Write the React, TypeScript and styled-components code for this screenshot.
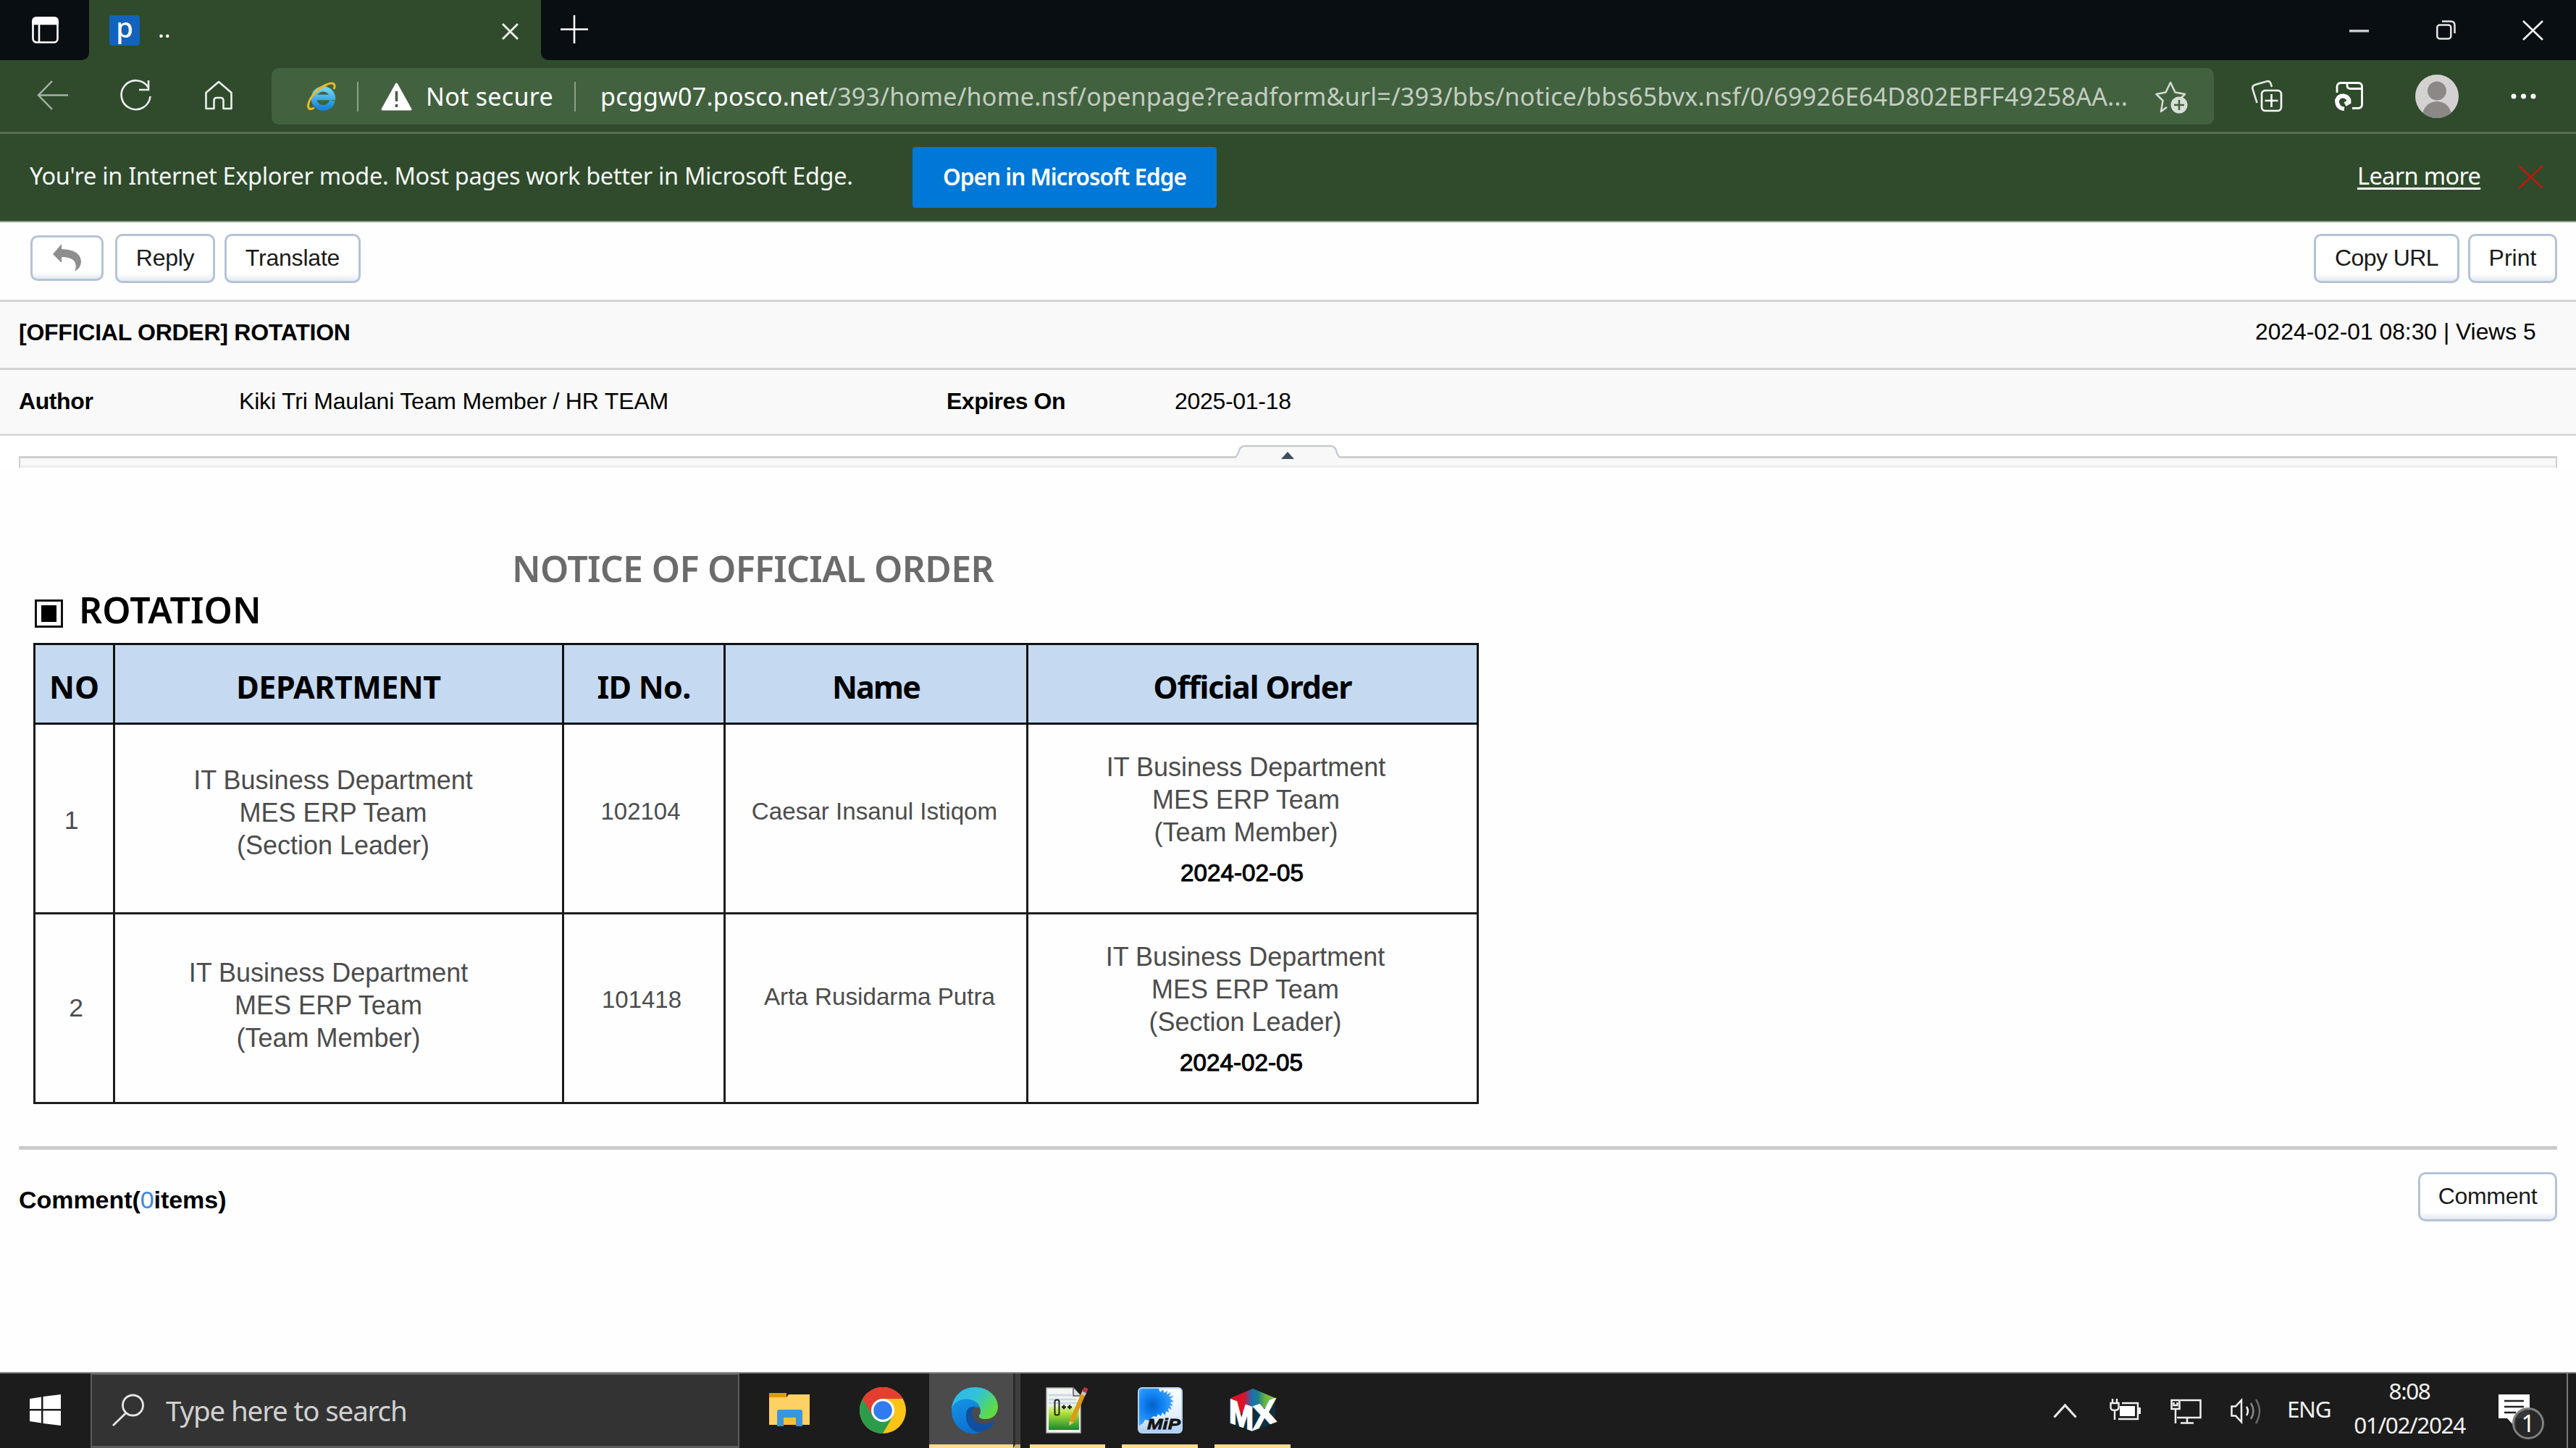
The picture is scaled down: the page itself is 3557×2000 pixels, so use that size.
import React from "react";
import styled, { createGlobalStyle } from "styled-components";

const UI = `"Noto Sans", "Open Sans", sans-serif`;
const DOC = `"Liberation Sans", Arial, sans-serif`;

const Global = createGlobalStyle`
  * { box-sizing: border-box; }
  html, body { margin: 0; padding: 0; background: #fefefe; }
  body { width: 3557px; height: 2000px; overflow: hidden; font-family: ${DOC}; color: #000; }
  svg { display: block; flex: none; overflow: visible; }
  button { font: inherit; color: inherit; }
`;

const Screen = styled.div`
  width: 3557px;
  height: 2000px;
  display: flex;
  flex-direction: column;
  overflow: hidden;
`;

/* A text run with a reserved width, so that neighbours keep their rhythm */
const Label = styled.span<{
  $w?: number; $ml?: number; $size: number; $track?: number; $weight?: number; $color?: string; $ui?: boolean; $align?: string; $lh?: number;
}>`
  flex: none;
  display: block;
  width: ${(p) => (p.$w ? `${p.$w}px` : "auto")};
  margin-left: ${(p) => p.$ml || 0}px;
  font-family: ${(p) => (p.$ui ? UI : DOC)};
  font-size: ${(p) => p.$size}px;
  font-weight: ${(p) => p.$weight || 400};
  letter-spacing: ${(p) => p.$track || 0}px;
  color: ${(p) => p.$color || "inherit"};
  text-align: ${(p) => p.$align || "left"};
  line-height: ${(p) => (p.$lh ? `${p.$lh}px` : "1.2")};
  white-space: nowrap;
`;

const Icon = styled.svg<{ $ml?: number; $mt?: number }>`
  margin-left: ${(p) => p.$ml || 0}px;
  margin-top: ${(p) => p.$mt || 0}px;
`;

/* ---------- browser chrome ---------- */

const TitleBar = styled.header`
  flex: none;
  height: 83px;
  display: flex;
  background: #090e12;
`;
const TabActions = styled.div`
  width: 123px;
  padding: 23px 0 0 44px;
  background: #090e12;
  border-bottom-right-radius: 10px;
`;
const TabShell = styled.div`
  display: flex;
  background: #2f4b2c;
`;
const Tab = styled.div`
  width: 624px;
  height: 83px;
  display: flex;
  align-items: flex-start;
  background: #2f4b2c;
`;
const TabRest = styled.div`
  flex: 1;
  display: flex;
  background: #090e12;
  border-bottom-left-radius: 10px;
`;
const TabBack = styled.div`
  flex: 1;
  display: flex;
  background: linear-gradient(90deg, #2f4b2c 20px, #090e12 20px);
`;
const Favicon = styled.div`
  width: 42px;
  height: 42px;
  margin: 21px 0 0 28px;
  border-radius: 4px;
  background: #1163bd;
  color: #fff;
  font: 500 38px/32px ${UI};
  text-align: center;
`;

const Toolbar = styled.div`
  flex: none;
  height: 102px;
  display: flex;
  align-items: flex-start;
  background: #2f4b2c;
  border-bottom: 3px solid #56704f;
`;
const AddressBar = styled.div`
  width: 2682px;
  height: 78px;
  margin: 11px 0 0 54px;
  display: flex;
  align-items: center;
  border-radius: 10px;
  background: #42623f;
`;
const Host = styled.span`
  color: #fff;
`;
const Rule = styled.i<{ $ml: number }>`
  width: 2px;
  height: 41px;
  margin-left: ${(p) => p.$ml}px;
  background: #8ba087;
`;
const Avatar = styled.div`
  width: 60px;
  height: 60px;
  margin: 20px 0 0 71px;
  border-radius: 50%;
  overflow: hidden;
`;

const InfoBar = styled.div`
  flex: none;
  height: 122px;
  display: flex;
  align-items: flex-start;
  padding-top: 18px;
  background: #2f4b2c;
  border-bottom: 2px solid #8a9a86;
`;
const OpenButton = styled.button`
  width: 420px;
  height: 84px;
  margin-left: 84px;
  padding: 0;
  display: flex;
  justify-content: center;
  border: 0;
  border-radius: 4px;
  background: #0078d7;
  color: #fff;
`;
const LearnMore = styled(Label)`
  text-decoration: underline;
  text-decoration-thickness: 3px;
  text-underline-offset: 4px;
  text-decoration-skip-ink: none;
`;

/* ---------- notice page ---------- */

const Actions = styled.div`
  flex: none;
  height: 107px;
  display: flex;
  align-items: flex-start;
  padding: 16px 26px 0 42px;
`;
const Spacer = styled.div`
  flex: 1;
`;
const Button = styled.button<{ $w: number; $ml?: number; $h?: number; $mt?: number }>`
  flex: none;
  width: ${(p) => p.$w}px;
  height: ${(p) => p.$h || 68}px;
  margin: ${(p) => p.$mt || 0}px 0 0 ${(p) => p.$ml || 0}px;
  padding: 0 0 2px;
  display: flex;
  align-items: center;
  justify-content: center;
  border: 3px solid #b4c3d6;
  border-radius: 10px;
  background: linear-gradient(#fff 84%, #e3e9f0);
  color: #1a1a1a;
`;
const MetaRow = styled.div<{ $h: number }>`
  flex: none;
  height: ${(p) => p.$h}px;
  display: flex;
  align-items: flex-start;
  padding-left: 26px;
  background: #f9f9f9;
  border-top: 3px solid #d3d3d3;
`;
const FoldArea = styled.div`
  flex: none;
  height: 48px;
  padding: 13px 26px 0 26px;
  border-top: 3px solid #d8d8d8;
  background: #fff;
`;
const FoldStrip = styled.div`
  height: 31px;
  display: flex;
  justify-content: center;
  background: linear-gradient(transparent 15px, #cfcfcf 15px, #cfcfcf 18px, #f8f8f8 18px, #f8f8f8 28px, #ededed 28px);
  border-image: linear-gradient(transparent 15px, #cfcfcf 15px) 0 2 0 2;
  border-style: solid;
  border-width: 0 2px;
`;

const NoticeTitle = styled.div`
  flex: none;
  height: 166px;
  padding: 98px 0 0 707px;
`;
const Section = styled.div`
  flex: none;
  height: 75px;
  display: flex;
  align-items: flex-start;
  padding-left: 48px;
`;
const Bullet = styled.i`
  width: 39px;
  height: 39px;
  margin-top: 15px;
  padding: 5px 6px;
  border: 3px solid #111;
  background: #000 content-box;
`;

const Table = styled.table`
  flex: none;
  width: 1995px;
  margin-left: 46px;
  border-collapse: collapse;
  table-layout: fixed;
`;
const HeadCell = styled.th<{ $w: number; $track: number }>`
  width: ${(p) => p.$w}px;
  height: 110px;
  padding: 8px 0 0;
  border: 3px solid #111;
  background: #c5d9f1;
  font: 700 43px/58px ${UI};
  letter-spacing: ${(p) => p.$track}px;
  white-space: nowrap;
`;
const Cell = styled.td<{ $top: number; $shift?: number; $size: number }>`
  height: 262px;
  padding: ${(p) => p.$top}px ${(p) => Math.max(0, -(p.$shift || 0))}px 0 ${(p) => Math.max(0, p.$shift || 0)}px;
  border: 3px solid #1c1c1c;
  vertical-align: top;
  text-align: center;
  font-size: ${(p) => p.$size}px;
  line-height: 45px;
  color: #4c4c4c;
  white-space: nowrap;
`;
const OrderDate = styled.div`
  margin: 11px 11px 0 0;
  font-size: 33.2px;
  color: #000;
  -webkit-text-stroke: 1px #000;
`;

const Divider = styled.div`
  flex: none;
  height: 5px;
  margin: 58px 26px 0;
  background: #ccc;
`;
const CommentBar = styled.div`
  flex: 1;
  display: flex;
  align-items: flex-start;
  padding: 31px 26px 0 26px;
`;
const Count = styled.span`
  font-weight: 400;
  color: #3b86e0;
`;

/* ---------- taskbar ---------- */

const Taskbar = styled.footer`
  flex: none;
  height: 105px;
  display: flex;
  align-items: flex-start;
  background: #1c1c1c;
  border-top: 2px solid #8d8d8d;
`;
const Start = styled.div`
  width: 125px;
  padding: 29px 0 0 41px;
`;
const Search = styled.div`
  width: 896px;
  height: 103px;
  display: flex;
  align-items: flex-start;
  background: #333;
  border: 2px solid #5c5c5c;
  border-bottom-width: 3px;
`;
const TaskButton = styled.div<{ $w: number; $ml: number; $open?: boolean; $active?: boolean }>`
  width: ${(p) => p.$w}px;
  height: 103px;
  margin-left: ${(p) => p.$ml}px;
  display: flex;
  justify-content: center;
  align-items: flex-start;
  padding-top: 19px;
  border-bottom: ${(p) => (p.$open ? "5px solid #fbdb8c" : "0")};
  background: ${(p) => (p.$active ? "#4b4b4b" : "transparent")};
`;
const ActiveEdge = styled.div`
  width: 10px;
  height: 103px;
  background: #3f3f3f;
  border-left: 3px solid #2b2b2b;
  border-bottom: 5px solid #cdb476;
`;
const Clock = styled.div`
  width: 170px;
  margin: 0 0 0 24px;
`;
const Notify = styled.div`
  position: relative;
  width: 64px;
  height: 64px;
  margin: 29px 0 0 38px;
`;
const Badge = styled.div`
  position: absolute;
  left: 19px;
  top: 18px;
  width: 44px;
  height: 44px;
  border: 3px solid #808080;
  border-radius: 50%;
  background: rgba(40, 40, 40, 0.92);
  color: #fff;
  font: 400 33px/37px ${UI};
  text-align: center;
`;
const PeekLine = styled.i`
  width: 2px;
  height: 103px;
  margin-left: 30px;
  background: #777;
`;

const HEAD: [string, number, number][] = [
  ["NO", 110, 0],
  ["DEPARTMENT", 620, -0.5],
  ["ID No.", 223, -0.7],
  ["Name", 418, -1.8],
  ["Official Order", 622, -1.1],
];

const Lines = ({ items }: { items: string[] }) => (
  <>
    {items.map((t) => (
      <div key={t}>{t}</div>
    ))}
  </>
);

export default function App() {
  return (
    <Screen>
      <Global />
      <TitleBar>
        <TabShell>
          <TabActions>
            <svg width="38" height="38" viewBox="0 0 38 38" fill="none" stroke="#fff" strokeWidth="2.6">
              <rect x="1.5" y="1.5" width="34" height="34" rx="5" />
              <path d="M1.5 10V6q0-4.500 4.500-4.500h25q4.500 0 4.500 4.500v4z" fill="#fff" />
              <path d="M10 10v26" />
            </svg>
          </TabActions>
        </TabShell>
        <Tab>
          <Favicon>p</Favicon>
          <Label $ui $ml={25} $w={440} $size={33} $color="#fff" $lh={80}>..</Label>
          <Icon $ml={35} $mt={32} width="23" height="23" stroke="#e8ece7" strokeWidth="3">
            <path d="M1 1L22 22M22 1L1 22" />
          </Icon>
        </Tab>
        <TabBack>
          <TabRest>
            <Icon $ml={27} $mt={21} width="38" height="40" stroke="#fff" strokeWidth="2.600">
              <path d="M0 19.500H38M19 0V39" />
            </Icon>
            <Spacer />
            <Icon $mt={41} width="27" height="4"><rect width="27" height="3.500" fill="#ccc" /></Icon>
            <Icon $ml={93} $mt={28} width="27" height="27" fill="none" stroke="#e6e6e6" strokeWidth="2.500">
              <rect x="1.300" y="6.500" width="19" height="19" rx="3.500" />
              <path d="M8 1.500H20q5.500 0 5.500 5.500V18" />
            </Icon>
            <Icon $ml={93} $mt={29} width="27" height="26" stroke="#eee" strokeWidth="2.700">
              <path d="M0 0L27 26M27 0L0 26" />
            </Icon>
            <Icon $ml={46} width="0" height="1" />
          </TabRest>
        </TabBack>
      </TitleBar>

      <Toolbar>
        <Icon $ml={51} $mt={29} width="43" height="39" fill="none" stroke="#a7b3a6" strokeWidth="2.500">
          <path d="M43 19.500H2M21 0L2 19.500L21 39" />
        </Icon>
        <Icon $ml={72} $mt={28} width="43" height="43" fill="none" stroke="#eef1ee" strokeWidth="2.600">
          <path d="M38.500 9.500A20 20 0 1 0 41.500 22" />
          <path d="M39 0V13H26" />
        </Icon>
        <Icon $ml={74} $mt={29} width="38" height="40" fill="none" stroke="#eef1ee" strokeWidth="2.600" strokeLinejoin="round">
          <path d="M1.500 16L19 1L36.500 16V38H25.500V27q0-4-4-4h-5q-4 0-4 4V38H1.500Z" />
        </Icon>
        <AddressBar>
          <Icon $ml={49} width="40" height="38" viewBox="0 0 40 38">
            <defs>
              <linearGradient id="ie" x1="0" y1="0" x2="0" y2="1">
                <stop offset="0" stopColor="#6fd3f5" />
                <stop offset="1" stopColor="#1b86dc" />
              </linearGradient>
            </defs>
            <path d="M35 25A13 13 0 1 1 35.300 20.500H13" fill="none" stroke="url(#ie)" strokeWidth="7.500" />
            <path d="M37 9C40 2 36-1 28 2.500C15 7 2 22 1.500 32C1.500 38 6 37 10 35" fill="none" stroke="#ecb91f" strokeWidth="3" />
          </Icon>
          <Rule $ml={29} />
          <Icon $ml={31} width="43" height="39" viewBox="0 0 43 39">
            <path d="M21.500 2L41 37H2Z" fill="#fff" stroke="#fff" strokeWidth="3" strokeLinejoin="round" />
            <path d="M21.500 12V26M21.500 30V34" stroke="#42623f" strokeWidth="3.600" />
          </Icon>
          <Label $ui $ml={19} $w={180} $size={34} $track={0.3} $color="#fff">Not secure</Label>
          <Rule $ml={25} />
          <Label $ui $ml={34} $w={2120} $size={34} $track={0.25} $color="#c3cdc1">
            <Host>pcggw07.posco.net</Host>
            /393/home/home.nsf/openpage?readform&amp;url=/393/bbs/notice/bbs65bvx.nsf/0/69926E64D802EBFF49258AA...
          </Label>
          <Icon $ml={27} $mt={4} width="46" height="46" viewBox="0 0 46 46">
            <path d="M16 36L8 42L10.500 27L1.500 18L14.500 15.500L21 2L27.500 15.500L41 18L36 23" fill="none" stroke="#d5dbd4" strokeWidth="2.500" strokeLinejoin="round" />
            <circle cx="33" cy="33" r="11.500" fill="#d9dfd8" />
            <path d="M33 26V40M26 33H40" stroke="#42623f" strokeWidth="2.500" />
          </Icon>
        </AddressBar>
        <Icon $ml={52} $mt={28} width="43" height="44" viewBox="0 0 43 44" fill="none" stroke="#e4e9e3" strokeWidth="2.600">
          <rect x="14" y="14" width="27" height="28" rx="5" stroke="#fff" />
          <path d="M27.500 19V37M18.500 28H36.500" stroke="#fff" />
          <path d="M28 9L26.500 4.500Q25 0 20.500 1.500L5 6Q.5 7.500 1.500 12L7.500 31" />
        </Icon>
        <Icon $ml={72} $mt={30} width="40" height="40" viewBox="0 0 40 40" fill="none" stroke="#fff" strokeWidth="2.800">
          <path d="M3 15V7q0-5.500 5.500-5.500H32q5.500 0 5.500 5.500V31q0 5.500-5.500 5.500H24M17 2v3q0 4.500 4.500 4.500H37" />
          <path d="M3 26Q5 19 12 19.500Q20 21 19.500 28L14 31" strokeWidth="6" />
          <path d="M3 24Q2 36 13 37.500" strokeWidth="5.500" />
        </Icon>
        <Avatar>
          <svg width="60" height="60">
            <rect width="60" height="60" fill="#d4d2d0" />
            <circle cx="30" cy="22.500" r="13" fill="#8b8886" />
            <circle cx="30" cy="57" r="20" fill="#8b8886" />
          </svg>
        </Avatar>
        <Icon $ml={71} $mt={46} width="38" height="8" fill="#fff">
          <circle cx="5" cy="4" r="3.500" /><circle cx="18.500" cy="4" r="3.500" /><circle cx="32" cy="4" r="3.500" />
        </Icon>
      </Toolbar>

      <InfoBar>
        <Label $ui $ml={41} $w={1135} $size={32.5} $track={-0.32} $color="#f4f6f4" $lh={80}>
          You're in Internet Explorer mode. Most pages work better in Microsoft Edge.
        </Label>
        <OpenButton>
          <Label $ui $size={31.5} $weight={600} $track={-1} $lh={81}>Open in Microsoft Edge</Label>
        </OpenButton>
        <Spacer />
        <LearnMore $ui $w={170} $size={32.5} $track={-0.65} $color="#fff" $lh={80}>Learn more</LearnMore>
        <Icon $ml={53} $mt={26} width="33" height="31" stroke="#cf1208" strokeWidth="2.400">
          <path d="M0 0L33 31M33 0L0 31" />
        </Icon>
        <Icon $ml={46} width="0" height="1" />
      </InfoBar>

      <Actions>
        <Button $w={101} $h={63} $mt={2}>
          <svg width="40" height="38" viewBox="0 0 40 38">
            <path d="M0 14L12 0V7Q38 8 39 24Q39 33 30 38Q34 29 29 23Q24 18 12 18V26Z" fill="#8e8e8e" />
          </svg>
        </Button>
        <Button $w={138} $ml={16}><Label $size={32} $track={-0.3}>Reply</Label></Button>
        <Button $w={188} $ml={13}><Label $size={32} $track={-0.2}>Translate</Label></Button>
        <Spacer />
        <Button $w={201}><Label $size={32} $track={-0.6}>Copy URL</Label></Button>
        <Button $w={123} $ml={12}><Label $size={32}>Print</Label></Button>
      </Actions>

      <MetaRow $h={94}>
        <Label $w={3088} $size={32} $weight={700} $track={-0.25} $lh={85}>[OFFICIAL ORDER] ROTATION</Label>
        <Label $size={31.8} $lh={82}>2024-02-01 08:30 | Views 5</Label>
      </MetaRow>
      <MetaRow $h={91}>
        <Label $w={304} $size={32} $weight={700} $track={-0.4} $lh={86}>Author</Label>
        <Label $w={977} $size={32} $track={-0.18} $lh={86}>Kiki Tri Maulani Team Member / HR TEAM</Label>
        <Label $w={315} $size={32} $weight={700} $track={-0.5} $lh={86}>Expires On</Label>
        <Label $size={32} $track={-0.3} $lh={86}>2025-01-18</Label>
      </MetaRow>
      <FoldArea>
        <FoldStrip>
          <svg width="147" height="28" viewBox="0 0 147 28">
            <path d="M0 17Q4 15 6 7Q8 1 14 1H132Q138 1 140 7Q142 15 146 17V28H0Z" fill="#f8f8f8" />
            <path d="M0 17Q4 15 6 7Q8 1 14 1H132Q138 1 140 7Q142 15 146 17" fill="none" stroke="#c6cbd1" strokeWidth="2.500" />
            <path d="M64 19L73 9L82 19Z" fill="#414e60" />
          </svg>
        </FoldStrip>
      </FoldArea>

      <NoticeTitle>
        <Label $ui $size={50} $weight={600} $track={-0.65} $color="#6b6b6b" $lh={80}>NOTICE OF OFFICIAL ORDER</Label>
      </NoticeTitle>
      <Section>
        <Bullet />
        <Label $ui $ml={22} $size={50} $weight={600} $track={0.1} $lh={59}>ROTATION</Label>
      </Section>

      <Table>
        <thead>
          <tr>
            {HEAD.map(([t, w, track]) => (
              <HeadCell key={t} $w={w} $track={track}>{t}</HeadCell>
            ))}
          </tr>
        </thead>
        <tbody>
          <tr>
            <Cell $top={110} $size={35.5} $shift={-8}>1</Cell>
            <Cell $top={54} $size={36} $shift={-15}>
              <Lines items={["IT Business Department", "MES ERP Team", "(Section Leader)"]} />
            </Cell>
            <Cell $top={97} $size={33} $shift={-9}>102104</Cell>
            <Cell $top={97} $size={33.2} $shift={-4}>Caesar Insanul Istiqom</Cell>
            <Cell $top={36} $size={36} $shift={-18}>
              <Lines items={["IT Business Department", "MES ERP Team", "(Team Member)"]} />
              <OrderDate>2024-02-05</OrderDate>
            </Cell>
          </tr>
          <tr>
            <Cell $top={107} $size={35.5} $shift={5}>2</Cell>
            <Cell $top={58} $size={36} $shift={-28}>
              <Lines items={["IT Business Department", "MES ERP Team", "(Team Member)"]} />
            </Cell>
            <Cell $top={95} $size={33} $shift={-6}>101418</Cell>
            <Cell $top={91} $size={33.2} $shift={10}>Arta Rusidarma Putra</Cell>
            <Cell $top={36} $size={36} $shift={-20}>
              <Lines items={["IT Business Department", "MES ERP Team", "(Section Leader)"]} />
              <OrderDate>2024-02-05</OrderDate>
            </Cell>
          </tr>
        </tbody>
      </Table>

      <Divider />
      <CommentBar>
        <Label $size={34} $weight={700} $track={-0.05} $lh={76}>Comment(<Count>0</Count>items)</Label>
        <Spacer />
        <Button $w={192}><Label $size={32} $track={-0.3}>Comment</Label></Button>
      </CommentBar>

      <Taskbar>
        <Start>
          <svg width="43" height="43" viewBox="0 0 43 43" fill="#fff">
            <path d="M0 6L16 3.500V20H0ZM18.500 3L43 0V20H18.500ZM0 22.500H16V39.500L0 37ZM18.500 22.500H43V43L18.500 40Z" />
          </svg>
        </Start>
        <Search>
          <Icon $ml={28} $mt={27} width="44" height="44" fill="none" stroke="#e6e6e6" strokeWidth="2.800">
            <circle cx="28.500" cy="15" r="14" />
            <path d="M19 25.500L1 43" />
          </Icon>
          <Label $ui $ml={30} $size={38.5} $track={-1.15} $color="#d0d0d0" $lh={98}>Type here to search</Label>
        </Search>

        <TaskButton $w={104} $ml={17}>
          <Icon $mt={6} width="56" height="50" viewBox="0 0 56 50">
            <path d="M0 2H24V8H0Z" fill="#dd9c05" />
            <path d="M0 8H24L27 4H56V46H0Z" fill="#fdd163" />
            <path d="M11 48V28q0-3 3-3H43q3 0 3 3V48H37V36H20V48Z" fill="#3995df" />
            <path d="M20 36H37V46H20Z" fill="#f6bf38" />
          </Icon>
        </TaskButton>
        <TaskButton $w={104} $ml={25}>
          <svg width="64" height="64" viewBox="0 0 64 64">
            <circle cx="32" cy="32" r="32" fill="#fcc417" />
            <path d="M32 32L4.300 16A32 32 0 0 0 32 64L46 40Z" fill="#2c9c4a" />
            <path d="M4.300 16A32 32 0 0 1 59.700 16H32L18 40Z" fill="#e33e30" />
            <circle cx="32" cy="32" r="16" fill="#fff" />
            <circle cx="32" cy="32" r="12.800" fill="#2f7cf0" />
          </svg>
        </TaskButton>
        <TaskButton $w={116} $ml={12} $open $active>
          <Icon $ml={10} width="64" height="64" viewBox="0 0 64 64">
            <defs>
              <linearGradient id="eg" x1="0" y1="0" x2="1" y2=".5">
                <stop offset="0" stopColor="#2fb4f2" /><stop offset=".55" stopColor="#33c3d4" /><stop offset="1" stopColor="#5fdc43" />
              </linearGradient>
              <linearGradient id="eb" x1="0" y1="0" x2=".4" y2="1">
                <stop offset="0" stopColor="#1595e6" /><stop offset="1" stopColor="#0b72cf" />
              </linearGradient>
            </defs>
            <path d="M0 31C1 12 15 0 32 0C51 0 64 13 64 27C64 38 56 44 47 44C40 44 37 42 38 39C41 36 41 27 34 21C22 12 3 18 0 31Z" fill="url(#eg)" />
            <path d="M0 32C2 20 14 15 24 17C32 18 38 23 39 29C30 24 22 32 25 43C28 54 38 58 44 61C22 71 0 55 0 32Z" fill="url(#eb)" />
            <path d="M20 38C19 52 30 64 40 62C49 60 57 54 59 49C60 47 58 47 56 48C44 54 30 50 28 36C28 32 30 29 33 27C24 26 20 31 20 38Z" fill="#11509f" />
          </Icon>
        </TaskButton>
        <ActiveEdge />
        <TaskButton $w={104} $ml={13} $open>
          <svg width="60" height="64" viewBox="0 0 60 64">
            <defs>
              <linearGradient id="np" x1="0" y1="0" x2="0" y2="1">
                <stop offset="0" stopColor="#e8f3d0" /><stop offset=".3" stopColor="#b5e23b" /><stop offset="1" stopColor="#138a2c" />
              </linearGradient>
            </defs>
            <path d="M1 1H38L48 12V63H1Z" fill="#f4f6f4" stroke="#aaa" strokeWidth="1.500" />
            <path d="M4 25H46V59H4Z" fill="url(#np)" />
            <path d="M4 11H36M4 17H42M4 22H44" stroke="#cbd9e2" strokeWidth="3" />
            <path d="M38 1V12H48" fill="#ddd" stroke="#555" strokeWidth="1.500" />
            <rect x="12.500" y="17.500" width="6" height="21" rx="2.500" fill="none" stroke="#222" strokeWidth="2" />
            <path d="M22 27.500h6M25 24.500v6M30 27.500h6M33 24.500v6" stroke="#222" strokeWidth="2.400" />
            <path d="M54 4L35 49" stroke="#dd9a14" strokeWidth="6" />
            <path d="M56 1L53 8" stroke="#b6334a" strokeWidth="6" />
            <path d="M53.500 7L51.500 11" stroke="#c6c6cc" strokeWidth="6" />
            <path d="M32.500 47L38 49L32.500 53Z" fill="#e8c49a" />
          </svg>
        </TaskButton>
        <TaskButton $w={105} $ml={23} $open>
          <svg width="62" height="64" viewBox="0 0 62 64">
            <defs>
              <linearGradient id="mp" x1="0" y1="0" x2="0" y2="1">
                <stop offset="0" stopColor="#fafdff" /><stop offset=".6" stopColor="#e6f1fd" /><stop offset="1" stopColor="#a9cdf8" />
              </linearGradient>
              <radialGradient id="mb" cx=".38" cy=".45" r=".6">
                <stop offset="0" stopColor="#0860c4" /><stop offset=".45" stopColor="#0f80f2" /><stop offset="1" stopColor="#3ba2fb" />
              </radialGradient>
            </defs>
            <rect x="1" y="1" width="60" height="62" rx="5" fill="url(#mp)" stroke="#b5d2f2" strokeWidth="2" />
            <path d="M2 4L5 2H29L31 7L35 3L36 8L41 5L40 10L46 7L43 13L50 12L45 16L50 20L45 21L49 26L44 25L47 31L42 29L43 35L39 33L38 39L34 35L32 40L28 37L26 41L22 40L18 43L15 46L10 45L7 50L2 53Z" fill="url(#mb)" />
            <text x="13" y="57.500" textLength="46" lengthAdjust="spacingAndGlyphs" fontFamily="Liberation Sans, sans-serif" fontSize="21" fontWeight="700" fontStyle="italic" fill="#151515" stroke="#151515" strokeWidth=".8">MiP</text>
          </svg>
        </TaskButton>
        <TaskButton $w={105} $ml={23} $open>
          <Icon $mt={1} width="64" height="62" viewBox="0 0 64 62">
            <defs>
              <linearGradient id="mx" x1="0" y1="0" x2="1" y2="0">
                <stop offset=".05" stopColor="#d4161f" /><stop offset=".3" stopColor="#e0102c" /><stop offset=".48" stopColor="#1770b4" /><stop offset=".62" stopColor="#1f7f8a" /><stop offset=".78" stopColor="#6cb83e" /><stop offset="1" stopColor="#8cc84a" />
              </linearGradient>
            </defs>
            <path d="M32 1L63 14V48L32 61L1 48V14Z" fill="#0b3040" />
            <path d="M32 1L63 14L50 28L32 27L14 36L1 14Z" fill="url(#mx)" />
            <g fontFamily="Liberation Sans, sans-serif" fontWeight="700" fontSize="46" fill="#fff" stroke="#fff" strokeWidth="2">
              <text transform="translate(-1 47) skewY(20)" textLength="34" lengthAdjust="spacingAndGlyphs">M</text>
              <text transform="translate(32 58) skewY(-20)" textLength="32" lengthAdjust="spacingAndGlyphs">X</text>
            </g>
          </Icon>
        </TaskButton>

        <Spacer />

        <Icon $mt={42} width="33" height="20" fill="none" stroke="#e8e8e8" strokeWidth="3.200">
          <path d="M1.500 18.500L16.500 2L31.500 18.500" />
        </Icon>
        <Icon $ml={45} $mt={34} width="43" height="32" viewBox="0 0 43 32" fill="none" stroke="#f0f0f0" strokeWidth="2.400">
          <path d="M17 7H39V29H12" />
          <rect x="14" y="11" width="21" height="14" fill="#fff" stroke="none" />
          <path d="M41.500 13V22" strokeWidth="3" />
          <path d="M4 1V7M10 1V7M1.500 7H12.500V13Q12.500 17 7 17Q1.500 17 1.500 13ZM7 17V30" />
        </Icon>
        <Icon $ml={41} $mt={35} width="43" height="36" viewBox="0 0 43 36" fill="none" stroke="#f0f0f0" strokeWidth="2.500">
          <path d="M14 2H41.500V26H9M23 26V33M14 33.500H32" />
          <path d="M1.500 2H12.500V14H1.500ZM4.500 5V9H9.500V5M7 14V34" />
        </Icon>
        <Icon $ml={40} $mt={33} width="44" height="38" viewBox="0 0 44 38" fill="none" stroke="#f0f0f0" strokeWidth="2.500">
          <path d="M1.500 12.500H7L15 4V34L7 25.500H1.500Z" />
          <path d="M22 13Q26 19 22 25" />
          <path d="M28 8Q35 19 28 30" stroke="#8a8a8a" />
          <path d="M35 3Q45 19 35 36" stroke="#6a6a6a" />
        </Icon>
        <Label $ui $ml={34} $w={60} $size={31.5} $color="#f0f0f0" $lh={97} $track={-1.4}>ENG</Label>
        <Clock>
          <Label $ui $size={31.5} $color="#f0f0f0" $lh={47} $align="center" $track={-1.4}>8:08</Label>
          <Label $ui $size={31.5} $color="#f0f0f0" $lh={47} $align="center" $track={-1.4}>01/02/2024</Label>
        </Clock>
        <Notify>
          <svg width="44" height="48" viewBox="0 0 44 48">
            <path d="M0 0H43V33H24V46L12 33H0Z" fill="#fff" />
            <path d="M8 9H35M8 17H35M8 25H24" stroke="#222" strokeWidth="2.600" />
          </svg>
          <Badge>1</Badge>
        </Notify>
        <PeekLine />
        <Icon $ml={11} width="0" height="1" />
      </Taskbar>
    </Screen>
  );
}
